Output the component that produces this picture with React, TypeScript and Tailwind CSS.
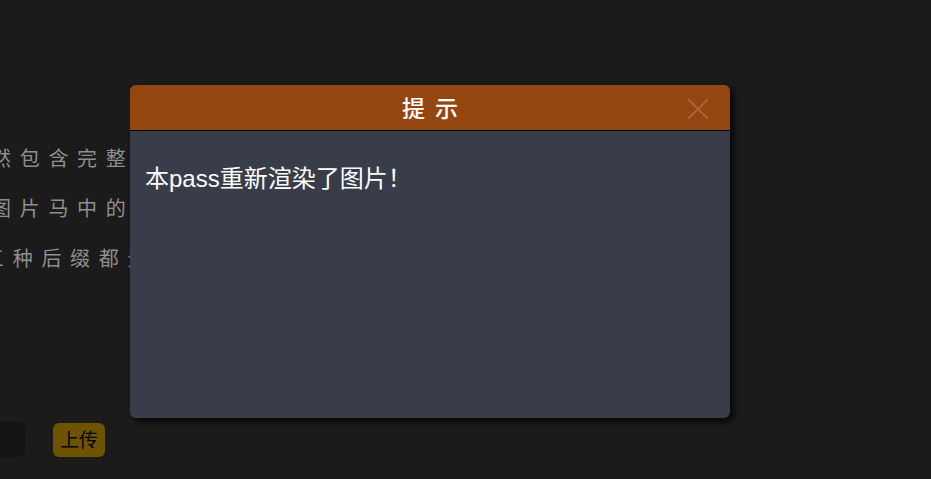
// ─── Background page (partly covered by the dialog) ─────────────────────────

function BackgroundPage() {
  return (
    <div className="flex flex-col pt-[133px] text-[20px] tracking-[8.7px] text-[#8f8f8f] [font-family:'Noto_Sans_CJK_SC',sans-serif]">
      <div className="ml-[-9px] flex h-[50px] items-center whitespace-nowrap">
        然包含完整的一句话木马代码内容
      </div>
      <div className="ml-[-9px] flex h-[50px] items-center whitespace-nowrap">
        图片马中的恶意代码仍然可以被执行
      </div>
      <div className="ml-[-16px] flex h-[50px] items-center whitespace-nowrap">
        三种后缀都无法绕过二次渲染检测
      </div>

      {/* Upload row */}
      <div className="mt-[139px] flex items-center gap-[28px] tracking-normal">
        <div className="ml-[-125px] h-[35px] w-[150px] rounded-[6px] bg-[#141414]" />
        <button
          type="button"
          className="flex h-[34px] w-[52px] items-center justify-center rounded-[6px] bg-[#6e5400] text-[19px] text-black"
        >
          上传
        </button>
      </div>
    </div>
  );
}

// ─── Dialog ──────────────────────────────────────────────────────────────────

function NoticeDialog() {
  return (
    <div className="absolute left-[130px] top-[85px] flex h-[333px] w-[600px] flex-col overflow-hidden rounded-[6px] bg-[#393d4a] shadow-[4px_4px_6px_rgba(0,0,0,0.75)] [font-family:'Liberation_Sans','Noto_Sans_CJK_SC',sans-serif]">
      <div className="relative flex h-[46px] items-center justify-center border-b border-black bg-[#944611]">
        <span className="ml-[10px] text-[23px] font-medium tracking-[10px] text-white [font-family:'Noto_Sans_CJK_SC',sans-serif]">
          提示
        </span>
        <button
          type="button"
          aria-label="关闭"
          className="absolute right-[22px] top-[14px] text-white/20"
        >
          <svg width={20} height={20} viewBox="0 0 20 20" fill="none" stroke="currentColor" strokeWidth={1.6}>
            <path d="M0 0 20 20M20 0 0 20" />
          </svg>
        </button>
      </div>
      <div className="px-[15px] pt-[36px] text-[24px] leading-none text-white">
        本pass重新渲染了图片！
      </div>
    </div>
  );
}

// ─── App ─────────────────────────────────────────────────────────────────────

export default function App() {
  return (
    <div className="relative h-[479px] w-full overflow-hidden bg-[#1b1b1b]">
      <BackgroundPage />
      <NoticeDialog />
    </div>
  );
}
